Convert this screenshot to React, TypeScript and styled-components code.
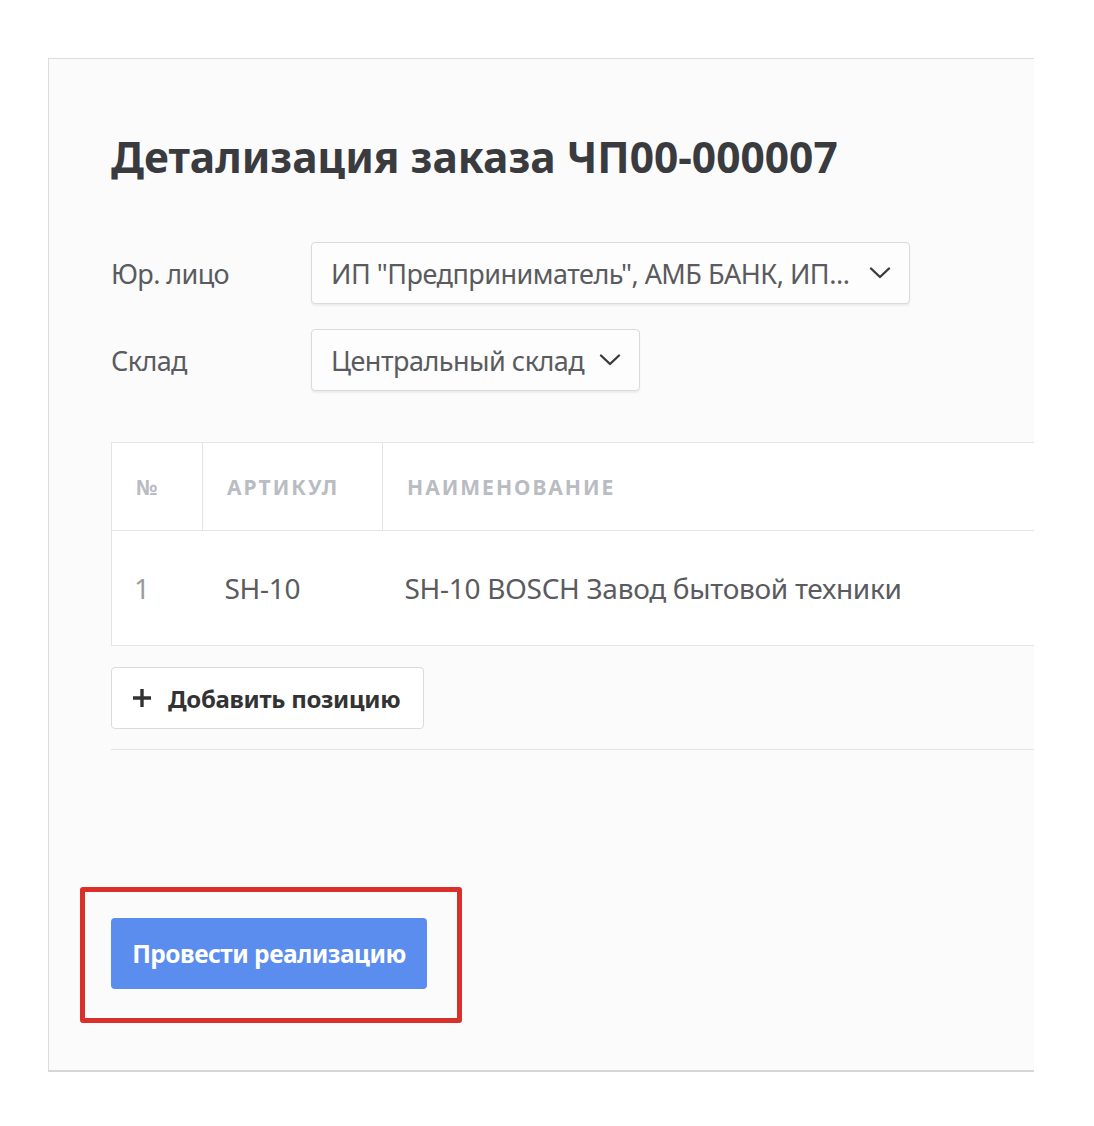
import styled, { createGlobalStyle } from 'styled-components';

const GlobalStyle = createGlobalStyle`
  html, body {
    margin: 0;
    padding: 0;
    background: #ffffff;
  }
  body {
    font-family: 'Noto Sans', 'Open Sans', sans-serif;
  }
`;

const Colors = {
  text: '#3a3b3e',
  muted: '#5a5b5e',
  faint: '#9a9b9e',
  header: '#b9bcc2',
  border: '#e3e4e6',
  field: '#d9dadc',
  panel: '#fbfbfc',
  primary: '#5b8def',
  red: '#d9302a',
};

type Row = { num: number; sku: string; name: string };

const rows: Row[] = [
  { num: 1, sku: 'SH-10', name: 'SH-10 BOSCH Завод бытовой техники' },
];

function Chevron() {
  return (
    <svg width="22" height="14" viewBox="0 0 22 14" fill="none">
      <path
        d="M2 2.5L11 11L20 2.5"
        stroke="#3a3b3e"
        strokeWidth="2.4"
        strokeLinecap="round"
        strokeLinejoin="round"
      />
    </svg>
  );
}

function Plus() {
  return (
    <svg width="20" height="20" viewBox="0 0 20 20" fill="none">
      <path d="M10 1V19M1 10H19" stroke="#333" strokeWidth="3.4" />
    </svg>
  );
}

export default function App() {
  return (
    <Page>
      <GlobalStyle />
      <Panel>
        <Content>
          <Title>Детализация заказа ЧП00-000007</Title>

          <Form>
            <Label>Юр. лицо</Label>
            <Select $width={599}>
              <span>ИП "Предприниматель", АМБ БАНК, ИП...</span>
              <Chevron />
            </Select>
            <Label>Склад</Label>
            <Select $width={329}>
              <span>Центральный склад</span>
              <Chevron />
            </Select>
          </Form>

          <Table>
            <thead>
              <tr>
                <HeadCell $width={91}>№</HeadCell>
                <HeadCell $width={180}>Артикул</HeadCell>
                <HeadCell>Наименование</HeadCell>
              </tr>
            </thead>
            <tbody>
              {rows.map((row) => (
                <tr key={row.num}>
                  <Cell $muted>{row.num}</Cell>
                  <Cell>{row.sku}</Cell>
                  <Cell>{row.name}</Cell>
                </tr>
              ))}
            </tbody>
          </Table>

          <AddButton>
            <Plus />
            Добавить позицию
          </AddButton>

          <Divider />

          <Highlight>
            <PrimaryButton>Провести реализацию</PrimaryButton>
          </Highlight>
        </Content>
      </Panel>
    </Page>
  );
}

const Page = styled.div`
  padding: 58px 0 0 48px;
  height: 1126px;
  box-sizing: border-box;
`;

const Panel = styled.div`
  width: 986px;
  height: 1014px;
  box-sizing: border-box;
  background: ${Colors.panel};
  border: 1px solid #dcdcde;
  border-right: none;
  border-bottom: 2px solid #d6d6d8;
  overflow: hidden;
`;

const Content = styled.div`
  width: 1100px;
  padding: 69px 0 0 62px;
`;

const Title = styled.h1`
  margin: 0;
  font-size: 42.5px;
  line-height: 58px;
  font-weight: 700;
  color: ${Colors.text};
`;

const Form = styled.div`
  margin-top: 56px;
  display: grid;
  grid-template-columns: 200px auto;
  row-gap: 25px;
  align-items: center;
  justify-items: start;
`;

const Label = styled.div`
  font-size: 27px;
  color: ${Colors.muted};
  letter-spacing: -0.6px;
`;

const Select = styled.div<{ $width: number }>`
  width: ${(p) => p.$width}px;
  height: 62px;
  box-sizing: border-box;
  padding: 0 18px 0 19px;
  display: flex;
  align-items: center;
  justify-content: space-between;
  gap: 6px;
  background: #fdfdfd;
  border: 1px solid ${Colors.field};
  border-radius: 4px;
  box-shadow: 0 2px 2px rgba(0, 0, 0, 0.06);
  font-size: 27px;
  color: ${Colors.muted};
  letter-spacing: -0.5px;
  white-space: nowrap;
`;

const Table = styled.table`
  margin-top: 51px;
  width: 1000px;
  border-collapse: collapse;
  background: #ffffff;
  border: 1px solid ${Colors.border};
`;

const HeadCell = styled.th<{ $width?: number }>`
  width: ${(p) => (p.$width ? `${p.$width}px` : 'auto')};
  height: 88px;
  padding: 0 24px;
  box-sizing: border-box;
  text-align: left;
  font-size: 21px;
  font-weight: 700;
  text-transform: uppercase;
  letter-spacing: 2px;
  color: ${Colors.header};
  border-right: 1px solid ${Colors.border};
  border-bottom: 1px solid ${Colors.border};
`;

const Cell = styled.td<{ $muted?: boolean }>`
  height: 114px;
  padding: 0 22px;
  font-size: 28px;
  letter-spacing: -0.3px;
  color: ${(p) => (p.$muted ? Colors.faint : Colors.muted)};
  white-space: nowrap;
`;

const AddButton = styled.button`
  margin-top: 21px;
  height: 62px;
  width: 313px;
  display: flex;
  align-items: center;
  gap: 16px;
  padding: 0 20px;
  background: #ffffff;
  border: 1px solid ${Colors.field};
  border-radius: 4px;
  font-family: 'Noto Sans', sans-serif;
  font-size: 24px;
  font-weight: 700;
  color: #333;
  letter-spacing: -0.3px;
`;

const Divider = styled.div`
  margin-top: 20px;
  height: 1px;
  background: ${Colors.border};
`;

const Highlight = styled.div`
  margin: 137px 0 0 -31px;
  width: 382px;
  height: 136px;
  box-sizing: border-box;
  border: 5px solid ${Colors.red};
  border-radius: 3px;
  padding: 26px 0 0 26px;
`;

const PrimaryButton = styled.button`
  width: 316px;
  height: 71px;
  background: ${Colors.primary};
  border: none;
  border-radius: 4px;
  color: #ffffff;
  font-family: 'Noto Sans', sans-serif;
  font-size: 24.5px;
  font-weight: 700;
  letter-spacing: -0.5px;
`;
